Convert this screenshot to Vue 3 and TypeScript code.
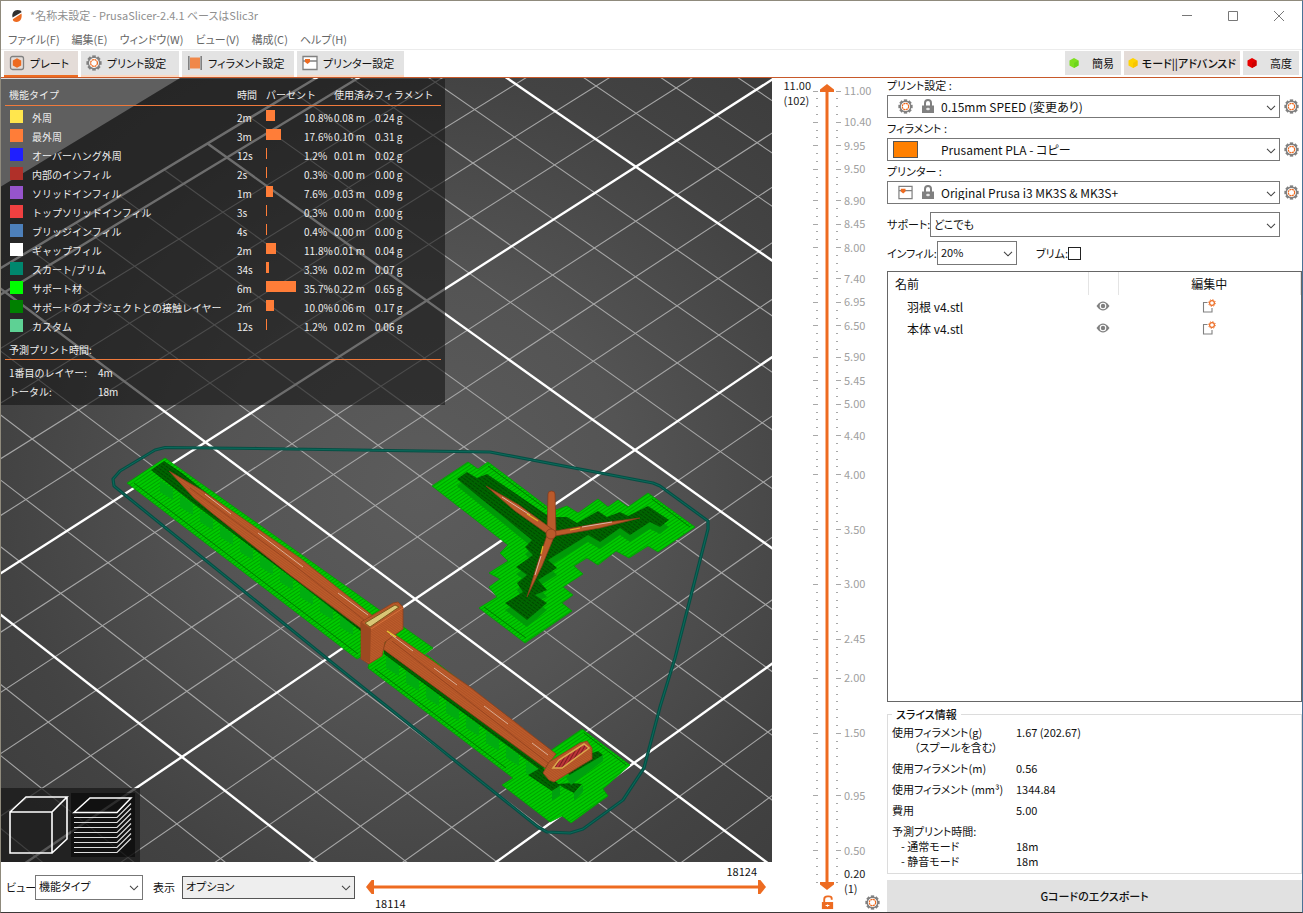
<script setup lang="ts">
import { ref } from 'vue'

type Point = [number, number]

const menus = ['ファイル(F)', '編集(E)', 'ウィンドウ(W)', 'ビュー(V)', '構成(C)', 'ヘルプ(H)']
const modes = [
  { name: '簡易', color: '#7ee01f', dark: '#6dd41c', active: false },
  { name: 'モード||アドバンスド', color: '#ffd400', dark: '#f8c400', active: true },
  { name: '高度', color: '#e60000', dark: '#cc0000', active: false },
]

const features = [
  { name: '外周', color: '#ffe64d', time: '2m', bar: 9, pct: '10.8%', len: '0.08 m', mass: '0.24 g' },
  { name: '最外周', color: '#ff7d38', time: '3m', bar: 15, pct: '17.6%', len: '0.10 m', mass: '0.31 g' },
  { name: 'オーバーハング外周', color: '#1f1fff', time: '12s', bar: 1, pct: '1.2%', len: '0.01 m', mass: '0.02 g' },
  { name: '内部のインフィル', color: '#b03029', time: '2s', bar: 1, pct: '0.3%', len: '0.00 m', mass: '0.00 g' },
  { name: 'ソリッドインフィル', color: '#9654cc', time: '1m', bar: 7, pct: '7.6%', len: '0.03 m', mass: '0.09 g' },
  { name: 'トップソリッドインフィル', color: '#f04040', time: '3s', bar: 1, pct: '0.3%', len: '0.00 m', mass: '0.00 g' },
  { name: 'ブリッジインフィル', color: '#4d80ba', time: '4s', bar: 1, pct: '0.4%', len: '0.00 m', mass: '0.00 g' },
  { name: 'ギャップフィル', color: '#ffffff', time: '2m', bar: 10, pct: '11.8%', len: '0.01 m', mass: '0.04 g' },
  { name: 'スカート/ブリム', color: '#00876e', time: '34s', bar: 3, pct: '3.3%', len: '0.02 m', mass: '0.07 g' },
  { name: 'サポート材', color: '#00ff00', time: '6m', bar: 30, pct: '35.7%', len: '0.22 m', mass: '0.65 g' },
  { name: 'サポートのオブジェクトとの接触レイヤー', color: '#008000', time: '2m', bar: 8, pct: '10.0%', len: '0.06 m', mass: '0.17 g' },
  { name: 'カスタム', color: '#5ed194', time: '12s', bar: 1, pct: '1.2%', len: '0.02 m', mass: '0.06 g' },
]

const objects = ['羽根 v4.stl', '本体 v4.stl']

/* Bed coordinates (1 unit = 1 cell) to view coordinates through a perspective map. */
function project(u: number, v: number): Point {
  const s = u / 10
  const t = v / 5
  const w = 1 - 0.04144 * s - 0.02712 * t
  return [(227 + 381.7 * s - 222.1 * t) / w, (157.5 + 273.85 * s + 126.58 * t) / w]
}
const minor: Point[][] = []
const major: Point[][] = []
for (let u = 0; u <= 32; u++) (u % 5 ? minor : major).push([project(u, -20), project(u, 22)])
for (let v = -20; v <= 22; v++) (v % 5 ? minor : major).push([project(-0.5, v), project(32, v)])
major.push([project(-0.5, -20), project(-0.5, 22)])

/* Layer ruler: 102 layers, the labelled ones by their distance from the top. */
const lastTick = 101
const labels: Record<number, string> = {
  0: '11.00', 4: '10.40', 7: '9.95', 10: '9.50', 14: '8.90', 17: '8.45', 20: '8.00', 24: '7.40',
  27: '6.95', 30: '6.50', 34: '5.90', 37: '5.45', 40: '5.00', 44: '4.40', 49: '4.00', 56: '3.50',
  63: '3.00', 70: '2.45', 75: '2.00', 82: '1.50', 90: '0.95', 97: '0.50',
}
const ticks = Array.from({ length: lastTick + 1 }, (_, i) => ({
  y: (i / lastTick) * 100 + '%',
  label: labels[i],
}))

/* Support columns that stand below the shaft. */
const columns: Point[] = []
for (let i = 0; i < 10; i++) columns.push([160 + i * 20, 480 + i * 15])
for (let i = 0; i < 8; i++) columns.push([386 + i * 20, 656 + i * 15])

const skirt = 'M113 479L120 471 155 450 165 447.500 257 448.500 490 452 653 483 660 486 708 521 708 529 675 658 660 707 644 768 623 800 583 829 570 833 547 832 538 827 340 669 125 495 114 486z'
const rotorContact = 'M457 479L467 472 477 478 487 474 550 517 567 517 577 523 598 511 607 517 620 512 628 516 648 506 669 520 660 527 650 522 630 535 620 528 600 542 588 535 548 560 557 568 538 580 547 590 535 595 547 603 527 620 505 603 523 592 517 583 527 575 516 567 533 555 525 547 532 540z'

const upper = ref(102)
const lower = ref(1)
const moveEnd = ref(18124)
const moveStart = ref(18114)
const brim = ref(false)

const gearTeeth = Array.from({ length: 8 }, (_, i) => i * 45)
</script>

<template>
  <div class="window">
    <svg class="defs" width="0" height="0" aria-hidden="true">
      <symbol id="gear" viewBox="0 0 16 16">
        <g fill="#808080">
          <rect v-for="a in gearTeeth" :key="a" x="6.2" y="0.4" width="3.6" height="3" :transform="`rotate(${a} 8 8)`" />
        </g>
        <circle cx="8" cy="8" r="5.6" fill="#fff" stroke="#808080" stroke-width="1.4" />
        <circle cx="8" cy="8" r="3.4" fill="none" stroke="#ed6b21" stroke-width="1.3" stroke-dasharray="2.2 .47" />
      </symbol>
      <symbol id="lock" viewBox="0 0 12 14">
        <path d="M3 7V4a3 3 0 0 1 6 0v3" fill="none" stroke="#808080" stroke-width="2" />
        <path d="M0 6.500h12v7.500H0z" fill="#808080" />
        <path d="M4 10h4M6 8.800v2.400" stroke="#fff" stroke-width="1.200" />
      </symbol>
      <symbol id="printer" viewBox="0 0 16 16">
        <path d="M1 1.500h14v13H1zM1 6h14" fill="#fff" stroke="#808080" stroke-width="1.300" />
        <path d="M3 4h5v3L5.500 9 3 7z" fill="#ed6b21" />
      </symbol>
      <symbol id="chevron" viewBox="0 0 10 6">
        <path d="M1 .800l4 4 4-4" fill="none" stroke="#444" stroke-width="1.100" />
      </symbol>
    </svg>

    <header class="titlebar">
      <svg class="logo" viewBox="0 0 12 14" aria-hidden="true">
        <path d="M1.500 8.500C.5 4 3 1 6.500 1c2.500 0 4 .8 4 2.200z" fill="#303030" />
        <path d="M1.800 10.200L10.500 4.500c.8 4.500-1 8.500-5 8.500-2.200 0-3.700-1-3.700-2.800z" fill="#ed6b21" />
      </svg>
      <h1>*名称未設定 - PrusaSlicer-2.4.1 ベースはSlic3r</h1>
      <button class="winbtn" aria-label="最小化"><svg viewBox="0 0 12 12"><path d="M1 5.500h10" /></svg></button>
      <button class="winbtn" aria-label="最大化"><svg viewBox="0 0 12 12"><path d="M1.500 1.500h9v9h-9z" /></svg></button>
      <button class="winbtn" aria-label="閉じる"><svg viewBox="0 0 12 12"><path d="M1 1l10 10M11 1L1 11" /></svg></button>
    </header>

    <nav class="menu"><button v-for="m in menus" :key="m">{{ m }}</button></nav>

    <div class="tabs">
      <button class="tab plate active">
        <svg viewBox="0 0 16 16" aria-hidden="true"><rect x="1.500" y="1.500" width="13" height="13" rx="2" fill="none" stroke="#808080" stroke-width="1.300" /><path d="M8 3.200l4.200 2.400v4.800L8 12.800l-4.200-2.400V5.600z" fill="#ed6b21" /></svg>
        プレート
      </button>
      <button class="tab print"><svg aria-hidden="true"><use href="#gear" /></svg>プリント設定</button>
      <button class="tab filament">
        <svg viewBox="0 0 16 16" aria-hidden="true"><path d="M3 2.500h10v11H3z" fill="#f0884a" /><path d="M1.800 1v14M14.200 1v14" stroke="#808080" stroke-width="1.600" /></svg>
        フィラメント設定
      </button>
      <button class="tab machine"><svg aria-hidden="true"><use href="#printer" /></svg>プリンター設定</button>
      <span class="spacer"></span>
      <button v-for="m in modes" :key="m.name" class="mode" :class="{ chosen: m.active }">
        <svg viewBox="0 0 12 12" aria-hidden="true"><path d="M6 1l4.500 2.500v5L6 11 1.500 8.500v-5z" :fill="m.color" /><path d="M10.500 3.500v5L6 11V6z" :fill="m.dark" /></svg>
        <span>{{ m.name }}</span>
      </button>
    </div>

    <main class="body">
      <section class="preview">
        <div class="canvas">
          <svg class="scene" viewBox="1 78 771 784" preserveAspectRatio="xMinYMin slice" aria-hidden="true">
            <defs>
              <radialGradient id="bed" gradientUnits="userSpaceOnUse" cx="420" cy="490" r="520">
                <stop offset="0" stop-color="#5c5c5c" />
                <stop offset=".4" stop-color="#545454" />
                <stop offset=".8" stop-color="#434343" />
                <stop offset="1" stop-color="#3e3e3e" />
              </radialGradient>
              <pattern id="support" width="3" height="3" patternUnits="userSpaceOnUse" patternTransform="rotate(-34)">
                <rect width="3" height="3" fill="#00ca00" /><rect width="3" height="1" fill="#00a200" />
              </pattern>
              <pattern id="contact" width="4" height="3" patternUnits="userSpaceOnUse" patternTransform="rotate(36)">
                <rect width="4" height="3" fill="#006400" /><rect width="3" height="1" fill="#004800" />
              </pattern>
              <pattern id="wall" width="2" height="2" patternUnits="userSpaceOnUse" patternTransform="rotate(36)">
                <rect width="2" height="2" fill="#bd5c2b" /><rect width="2" height="1" fill="#ae5226" />
              </pattern>
              <pattern id="top" width="3" height="3" patternUnits="userSpaceOnUse" patternTransform="rotate(-60)">
                <rect width="3" height="3" fill="#bb3438" /><rect width="3" height="1" fill="#7c1c20" />
              </pattern>
            </defs>
            <rect x="0" y="78" width="2000" height="2000" fill="url(#bed)" />
            <path d="M0 78h180L0 187z" fill="#dadada" />
            <g stroke="#a6a6a6" stroke-width="1.100">
              <line v-for="(l, i) in minor" :key="i" :x1="l[0][0]" :y1="l[0][1]" :x2="l[1][0]" :y2="l[1][1]" />
            </g>
            <g stroke="#fff" stroke-width="2.400">
              <line v-for="(l, i) in major" :key="i" :x1="l[0][0]" :y1="l[0][1]" :x2="l[1][0]" :y2="l[1][1]" />
            </g>

            <g fill="none" stroke-linejoin="round">
              <path :d="skirt" stroke="#064f44" stroke-width="3.200" />
              <path :d="skirt" stroke="#0c6b5c" stroke-width="1" />
            </g>

            <g stroke="#00a000" stroke-width=".8">
              <path fill="url(#support)" d="M165 458L433 648 424 655 415 660 427 655 550 751 582 729 630 765 603 789 608 796 571 823 562 816 550 822 502 785 513 778 368 668 372 650 357 659 127 483z" />
              <path fill="url(#support)" d="M432 486L468 462 478 469 488 462 553 511 567 506 578 513 598 499 608 507 618 500 628 507 648 493 695 527 658 552 648 546 629 558 616 551 598 565 587 558 574 566 583 574 563 587 573 595 562 603 572 611 525 643 479 608 497 597 489 587 500 579 489 573 508 561 500 553 508 545z" />
            </g>
            <path d="M134 483L358 654M375 669L506 768M584 733L626 765M484 607L526 638M652 499L690 527M488 466L546 509" fill="none" stroke="#007c00" />
            <path v-for="(c, i) in columns" :key="i" :d="`M${c[0]} ${c[1]}l13 9v11l-13-8z`" fill="#00ad10" />
            <g fill="url(#contact)">
              <path d="M151 470L164 461 182 473 366 622 362 632 300 584 190 501z" />
              <path d="M384 646L545 768 540 770 384 654z" />
              <path d="M528 775L542 767 560 786 552 791zM558 784l14-1 10 1-8 9-10-5zM592 753l6-2 5 4-30 22-8-5z" />
            </g>
            <path d="M552 791l8-5v9l-8 6zM574 793l9-8v7l-9 9zM566 777l37-22v6l-32 24z" fill="#00a010" />
            <path :d="rotorContact" transform="translate(0 7)" fill="#009a08" />
            <path :d="rotorContact" fill="url(#contact)" />

            <g fill="url(#wall)" stroke="#8d401c" stroke-width=".8">
              <path d="M169 471L203 491 300 558 373 616 362 629 290 575 212 513 194 498z" />
              <path d="M390 631L470 687 556 754 545 768 470 713 383 649z" />
              <path d="M361 622L393 603 398 602 403 607 403 629 385 642 382 656 369 664 361 659z" />
              <path d="M543 773L549 762 580 743 587 741 592 748 592 759 554 782 549 780z" />
            </g>
            <path d="M361 622L371 629 370 663 361 659z" fill="#9d4921" />
            <path d="M371 629L403 608" stroke="#d8733b" fill="none" />
            <path d="M365 623L395 605 399 607 370 627z" fill="#d9c675" stroke="#7c5a1c" />
            <path d="M553 768L559 760 584 744 589 748 562 768z" fill="url(#top)" stroke="#dba84c" stroke-width="1.500" />
            <g stroke="#dcae94" stroke-width="1" fill="none">
              <path d="M205 494L231 514M258 533L303 567M338 593L368 615M390 634L413 651M434 668L457 685M484 706L508 724M532 743L548 755" />
            </g>
            <path d="M190 488L290 562 364 620M392 641L548 763" stroke="#8e3f1c" stroke-width=".7" fill="none" />
            <path d="M387 631l9 6" stroke="#e6c832" stroke-width="1.500" />
            <g fill="#ba5a2b" stroke="#82391a" stroke-width=".7">
              <path d="M548 494a3.500 3 0 0 1 7 0l1 38h-9z" />
              <path d="M486 486L519 505 552 529 549 535 515 511z" />
              <path d="M640 518L600 523 555 531 555 536 600 528z" />
              <path d="M527 597L538 562 547 535 554 537 542 566z" />
              <circle cx="551" cy="534" r="5" />
            </g>
            <path d="M502 497L530 515M582 527L612 522M541 556L535 575" stroke="#e6cdc8" stroke-width=".8" />
            <path d="M527 514l11 7M570 530l10-2M543 546l-2 8" stroke="#e0b428" stroke-width="1.200" />
          </svg>

          <div class="legend">
            <table>
              <colgroup><col class="c-sw" /><col class="c-name" /><col class="c-time" /><col class="c-bar" /><col class="c-pct" /><col class="c-len" /><col /></colgroup>
              <thead>
                <tr><th colspan="2">機能タイプ</th><th>時間</th><th colspan="2">パーセント</th><th colspan="2">使用済みフィラメント</th></tr>
              </thead>
              <tbody>
                <tr v-for="f in features" :key="f.name">
                  <td><span class="swatch" :style="{ background: f.color }"></span></td>
                  <td>{{ f.name }}</td>
                  <td>{{ f.time }}</td>
                  <td><span class="bar" :style="{ width: f.bar + 'px' }"></span></td>
                  <td>{{ f.pct }}</td>
                  <td>{{ f.len }}</td>
                  <td>{{ f.mass }}</td>
                </tr>
              </tbody>
            </table>
            <h2>予測プリント時間:</h2>
            <dl>
              <dt>1番目のレイヤー:</dt><dd>4m</dd>
              <dt>トータル:</dt><dd>18m</dd>
            </dl>
          </div>

          <div class="viewtools">
            <button aria-label="3Dエディタービュー">
              <svg viewBox="0 0 64 64" fill="none" stroke="#fff" stroke-width="1.600"><path d="M4 19h42v41H4zM4 19L20 4h41L46 19M61 4v42L46 60" /></svg>
            </button>
            <button class="on" aria-label="プレビュー">
              <svg viewBox="0 0 64 64" fill="none" stroke="#ddd" stroke-width="1.200"><path d="M3 19.500L19 5h41L46 19.500z" stroke="#fff" stroke-width="1.500" /><path d="M3 24.500h43l14-14M3 29.500h43l14-14M3 34.500h43l14-14M3 39.500h43l14-14M3 44.500h43l14-14M3 49.500h43l14-14M3 54.500h43l14-14M3 59.500h43l14-14" /></svg>
            </button>
          </div>
        </div>

        <footer class="viewbar">
          <label for="view" class="l-view">ビュー</label>
          <span class="combo view"><select id="view"><option>機能タイプ</option></select><svg class="arrow"><use href="#chevron" /></svg></span>
          <label for="show" class="l-show">表示</label>
          <span class="combo show"><select id="show"><option>オプション</option></select><svg class="arrow"><use href="#chevron" /></svg></span>
          <div class="moves">
            <output class="end">{{ moveEnd }}</output>
            <div class="hslider">
              <input v-model.number="moveStart" class="low" type="range" min="18114" max="18124" aria-label="開始位置" />
              <input v-model.number="moveEnd" class="high" type="range" min="18114" max="18124" aria-label="終了位置" />
            </div>
            <output class="start">{{ moveStart }}</output>
          </div>
        </footer>
      </section>

      <section class="layers">
        <div class="ruler">
          <div class="scale">
            <svg aria-hidden="true">
              <template v-for="(t, i) in ticks" :key="i">
                <line :x1="t.label ? 41 : 44" x2="46" :y1="t.y" :y2="t.y" />
                <line x1="64" :x2="t.label ? 69 : 66" :y1="t.y" :y2="t.y" />
                <text v-if="t.label" x="72" :y="t.y" dy="4">{{ t.label }}</text>
              </template>
            </svg>
          </div>
          <input v-model.number="lower" class="vlow" type="range" min="1" max="102" aria-label="下のレイヤー" />
          <input v-model.number="upper" class="vhigh" type="range" min="1" max="102" aria-label="上のレイヤー" />
          <output class="top">11.00<br />({{ upper }})</output>
          <output class="bottom">0.20<br />({{ lower }})</output>
        </div>
        <div class="rulertools">
          <button aria-label="ロック解除">
            <svg viewBox="0 0 14 16" aria-hidden="true"><path d="M3.500 8V4.500C3.500 2.500 5 1.500 7 1.500h1.500c2 0 3 1 3 2.500V5" fill="none" stroke="#ed6b21" stroke-width="2" /><path d="M1 7.500h12V15H1z" fill="#ed6b21" /><path d="M5 11.200h4M7 10v2.400" stroke="#fff" stroke-width="1.200" /></svg>
          </button>
          <button aria-label="設定"><svg aria-hidden="true"><use href="#gear" /></svg></button>
        </div>
      </section>

      <aside class="side">
        <div class="preset">
          <label for="p1">プリント設定 :</label>
          <div class="line">
            <span class="combo"><select id="p1"><option>0.15mm SPEED (変更あり)</option></select>
              <svg class="ico"><use href="#gear" /></svg><svg class="ico lock"><use href="#lock" /></svg><svg class="arrow"><use href="#chevron" /></svg></span>
            <button class="gear" aria-label="プリント設定を編集"><svg><use href="#gear" /></svg></button>
          </div>
          <label for="p2">フィラメント :</label>
          <div class="line">
            <span class="combo"><select id="p2"><option>Prusament PLA - コピー</option></select>
              <span class="chip"></span><svg class="arrow"><use href="#chevron" /></svg></span>
            <button class="gear" aria-label="フィラメントを編集"><svg><use href="#gear" /></svg></button>
          </div>
          <label for="p3">プリンター :</label>
          <div class="line">
            <span class="combo"><select id="p3"><option>Original Prusa i3 MK3S &amp; MK3S+</option></select>
              <svg class="ico"><use href="#printer" /></svg><svg class="ico lock"><use href="#lock" /></svg><svg class="arrow"><use href="#chevron" /></svg></span>
            <button class="gear" aria-label="プリンターを編集"><svg><use href="#gear" /></svg></button>
          </div>
        </div>

        <div class="option support">
          <label for="sup">サポート:</label>
          <span class="combo"><select id="sup"><option>どこでも</option></select><svg class="arrow"><use href="#chevron" /></svg></span>
        </div>
        <div class="option infill">
          <label for="inf">インフィル:</label>
          <span class="combo"><select id="inf"><option>20%</option></select><svg class="arrow"><use href="#chevron" /></svg></span>
          <label for="brim">ブリム:</label>
          <input id="brim" v-model="brim" type="checkbox" />
        </div>

        <div class="objects">
          <table>
            <colgroup><col class="o-name" /><col class="o-eye" /><col /></colgroup>
            <thead><tr><th>名前</th><th></th><th class="mid">編集中</th></tr></thead>
            <tbody>
              <tr v-for="o in objects" :key="o">
                <td>{{ o }}</td>
                <td class="mid"><svg class="eye" viewBox="0 0 14 10"><path d="M.5 5C3 1.500 5 .5 7 .5S11 1.500 13.500 5C11 8.500 9 9.500 7 9.500S3 8.500.5 5z" fill="#808080" /><circle cx="7" cy="5" r="3.300" fill="#fff" /><circle cx="7" cy="5" r="2.200" fill="#808080" /></svg></td>
                <td class="mid"><svg class="edit" viewBox="0 0 14 14"><path d="M5.500 3.500H1.500v9.500h8.500V9" fill="none" stroke="#808080" stroke-width="1.100" /><circle cx="10" cy="4" r="2.400" fill="#fff" stroke="#ed6b21" stroke-width="1.200" /><circle cx="10" cy="4" r="3.500" fill="none" stroke="#ed6b21" stroke-width=".8" stroke-dasharray="1.200 1.549" /></svg></td>
              </tr>
            </tbody>
          </table>
        </div>

        <fieldset>
          <legend>スライス情報</legend>
          <dl>
            <dt>使用フィラメント(g)<small>（スプールを含む）</small></dt><dd>1.67 (202.67)</dd>
            <dt>使用フィラメント(m)</dt><dd>0.56</dd>
            <dt>使用フィラメント (mm³)</dt><dd>1344.84</dd>
            <dt>費用</dt><dd>5.00</dd>
            <dt class="est">予測プリント時間:<small>- 通常モード</small><small>- 静音モード</small></dt><dd class="times">18m<br />18m</dd>
          </dl>
        </fieldset>
        <button class="export">Gコードのエクスポート</button>
      </aside>
    </main>
  </div>
</template>

<style>
html, body, #app { height: 100%; margin: 0; }
</style>

<style scoped>
*, *::before { box-sizing: border-box; }
.window {
  display: flex; flex-direction: column; height: 100%; min-height: 760px; overflow: hidden;
  border: 1px solid #8f8a7c; border-right-color: #4a7296; border-bottom-color: #3c3838;
  background: #fff; color: #111;
  font: 11px/15px "Noto Sans CJK JP", "Noto Sans", sans-serif;
  font-feature-settings: "palt";
}
.defs { position: absolute; }
button, select, input { font: inherit; color: inherit; font-feature-settings: inherit; margin: 0; }
button { border: 0; padding: 0; background: none; white-space: nowrap; }
svg { display: block; flex: none; }

.titlebar { display: flex; align-items: center; height: 29px; padding-left: 10px; flex: none; }
.logo { width: 12px; height: 14px; margin-right: 7px; }
h1 { margin: 0; flex: 1; font-size: 11px; font-weight: 400; color: #8f8f8f; }
.winbtn { width: 46px; height: 29px; display: grid; place-items: center; }
.winbtn svg { width: 12px; height: 12px; fill: none; stroke: #777; }
.menu { display: flex; gap: 12px; height: 20px; padding-left: 7px; flex: none; border-bottom: 1px solid #ececec; }
.menu button { color: #666; }
.tabs { display: flex; gap: 3px; height: 28px; flex: none; padding: 1px 3px 0; border-bottom: 1px solid #c8592a; }
.tab { display: flex; align-items: center; gap: 5px; height: 26px; padding: 0 0 0 5px; background: #e3e3e3; border-bottom: 2px solid #fbd9c3; }
.tab svg { width: 16px; height: 16px; }
.tab.active { background: #e4dcd8; border-color: #ed6b21; }
.plate { width: 74px; }
.print { width: 98px; }
.filament { width: 112px; }
.machine { width: 107px; }
.spacer { flex: 1; }
.mode { display: flex; align-items: center; height: 24px; min-width: 56px; padding: 0 7px 0 3px; background: #e3e3e3; }
.mode svg { width: 12px; height: 12px; }
.mode span { flex: 1; text-align: right; }
.mode.chosen { width: 116px; padding-right: 4px; background: #e4dcd8; font-weight: 500; }

.body { display: grid; grid-template-columns: minmax(0, 1fr) 115px 415px; flex: 1; min-height: 0; }
.preview { display: flex; flex-direction: column; min-width: 0; min-height: 0; }
.canvas { position: relative; flex: 1; min-height: 0; overflow: hidden; }
.scene { width: 100%; height: 100%; }
.legend {
  position: absolute; top: 1px; left: 0; width: 444px; height: 326px; padding: 6px 4px;
  background: rgba(24, 24, 24, .63); color: #eee; font-size: 10px; line-height: 19px; font-feature-settings: normal;
}
.legend table { width: 100%; table-layout: fixed; border-collapse: collapse; }
.c-sw { width: 27px; } .c-name { width: 205px; } .c-time { width: 29px; } .c-bar { width: 38px; } .c-pct { width: 30px; } .c-len { width: 41px; }
.legend th, .legend td { padding: 0; height: 19px; text-align: left; font-weight: 400; white-space: nowrap; }
.legend th { height: 20px; border-bottom: 1px solid #f07a3c; }
.legend th:first-child { padding-left: 4px; }
.legend tbody tr:first-child td { padding-top: 2px; }
.swatch { display: block; width: 13px; height: 13px; margin: 0 0 2px 5px; }
.bar { display: block; height: 11px; margin-bottom: 3px; background: #ff7d38; }
.legend h2 { margin: 4px 0 3px; padding-left: 4px; font-size: 10px; font-weight: 400; line-height: 19px; border-bottom: 1px solid #f07a3c; }
.legend dl { display: grid; grid-template-columns: 89px 1fr; margin: 0; padding-left: 4px; }
.legend dd { margin: 0; }
.viewtools { position: absolute; left: 0; bottom: 0; display: flex; gap: 1px; width: 139px; height: 74px; padding: 5px; background: rgba(24, 24, 24, .72); }
.viewtools button { width: 64px; height: 64px; }
.viewtools svg { width: 64px; height: 64px; }
.viewtools .on { background: rgba(0, 0, 0, .5); }

.viewbar { display: flex; align-items: center; height: 50px; padding-left: 5px; flex: none; }
.viewbar label { flex: none; white-space: nowrap; }
.l-view { width: 29px; }
.l-show { width: 29px; }
.combo { position: relative; display: block; }
.combo select { display: block; width: 100%; height: 100%; padding: 0 20px 1px 3px; border: 1px solid #777; border-radius: 0; background: #fff; appearance: none; }
.combo .arrow { position: absolute; right: 4px; top: 50%; width: 10px; height: 6px; margin-top: -2px; pointer-events: none; }
.view { width: 108px; height: 25px; margin-right: 10px; }
.show { width: 173px; height: 23px; margin-right: 11px; }
.show select { background: #eee; border-color: #555; }
.moves { flex: 1; display: flex; flex-direction: column; padding: 0 6px 0 0; }
.moves output { line-height: 16px; }
.moves .end { align-self: flex-end; padding-right: 9px; }
.moves .start { padding-left: 9px; }
.hslider { position: relative; height: 16px; }
.hslider::before { content: ""; position: absolute; left: 7px; right: 7px; top: 6px; height: 4px; background: #ed6b21; border-top: 1px solid #f9b48d; border-bottom: 1px solid #f9b48d; }
input[type="range"] { position: absolute; margin: 0; appearance: none; background: none; pointer-events: none; }
.hslider input { inset: 0; width: 100%; height: 16px; }
input[type="range"]::-webkit-slider-thumb { appearance: none; background: #ed6b21; pointer-events: auto; }
.hslider input::-webkit-slider-thumb { width: 8px; height: 14px; }
.low::-webkit-slider-thumb { clip-path: polygon(0 50%, 70% 0, 100% 0, 100% 100%, 70% 100%); }
.high::-webkit-slider-thumb { clip-path: polygon(100% 50%, 30% 0, 0 0, 0 100%, 30% 100%); }

.layers { display: flex; flex-direction: column; min-height: 0; padding-top: 6px; color: #222; }
.ruler { position: relative; flex: 1; min-height: 0; }
.scale { position: absolute; inset: 7px 0 8px; }
.scale svg { width: 100%; height: 100%; overflow: visible; }
.scale line { stroke: #a8a8a8; stroke-width: 1; shape-rendering: crispEdges; }
.scale text { fill: #a0a0a0; font-size: 11px; }
.ruler::before { content: ""; position: absolute; left: 53px; top: 7px; bottom: 7px; width: 4px; background: #ed6b21; border-left: 1px solid #f9b48d; border-right: 1px solid #f9b48d; }
.ruler input { left: 48px; top: 0; width: 14px; height: 100%; writing-mode: vertical-lr; direction: rtl; }
.ruler input::-webkit-slider-thumb { width: 14px; height: 8px; }
.vhigh::-webkit-slider-thumb { clip-path: polygon(50% 0, 100% 70%, 100% 100%, 0 100%, 0 70%); }
.vlow::-webkit-slider-thumb { clip-path: polygon(50% 100%, 100% 30%, 100% 0, 0 0, 0 30%); }
.ruler output { position: absolute; line-height: 15px; }
.top { right: 76px; top: -6px; }
.bottom { left: 72px; bottom: -6px; }
.rulertools { display: flex; justify-content: space-between; height: 22px; padding: 3px 7px 0 48px; }
.rulertools svg { width: 15px; height: 15px; }

.side { display: flex; flex-direction: column; min-height: 0; }
.preset label { display: block; height: 17px; }
.line { display: flex; align-items: center; gap: 4px; height: 23px; margin-bottom: 3px; }
.line .combo { flex: 1; height: 23px; }
.line select { padding: 0 20px 1px 53px; font-size: 12px; }
.gear { width: 15px; margin-right: 3px; }
.gear svg { width: 15px; height: 15px; }
.ico { position: absolute; left: 11px; top: 4px; width: 15px; height: 15px; pointer-events: none; }
.ico.lock { left: 35px; width: 12px; height: 14px; }
.chip { position: absolute; left: 6px; top: 3px; width: 25px; height: 17px; background: #ff8000; border: 1px solid #555; }
.option { display: flex; align-items: center; margin-right: 22px; flex: none; }
.option label { flex: none; white-space: nowrap; }
.support { height: 25px; margin-top: 5px; }
.support label { width: 43px; }
.support .combo { flex: 1; height: 25px; }
.infill { height: 24px; margin-top: 4px; }
.infill label:first-child { width: 50px; }
.infill .combo { width: 80px; height: 24px; margin-right: 19px; }
.infill input { appearance: none; width: 13px; height: 13px; border: 1px solid #222; background: #fff; }
.infill input:checked { background: #ed6b21; }
.objects { flex: 1; min-height: 80px; margin-top: 6px; border: 1px solid #666; font-size: 12px; }
.objects table { width: 100%; table-layout: fixed; border-collapse: collapse; }
.o-name { width: 200px; } .o-eye { width: 30px; }
.objects th { height: 23px; padding: 0 0 0 7px; text-align: left; font-weight: 400; border-right: 1px solid #e4e4e4; }
.objects td { height: 22px; padding: 0 0 0 19px; }
.objects .mid { padding: 0; text-align: center; }
.objects td svg { margin: 0 auto; }
.eye { width: 14px; height: 10px; }
.edit { width: 14px; height: 14px; }
fieldset { min-width: 0; margin: 5px 0 6px; padding: 0 4px 4px; border: 1px solid #dcdcdc; flex: none; }
legend { padding: 0 4px; font-weight: 500; }
fieldset dl { display: grid; grid-template-columns: 124px 1fr; row-gap: 6px; margin: 3px 0 0; }
fieldset dd { margin: 0; }
small { display: block; font-size: 11px; padding-left: 22px; }
.est small { padding-left: 9px; }
.times { padding-top: 15px; }
.export { height: 32px; flex: none; background: #e1e1e1; font-weight: 500; }
</style>
